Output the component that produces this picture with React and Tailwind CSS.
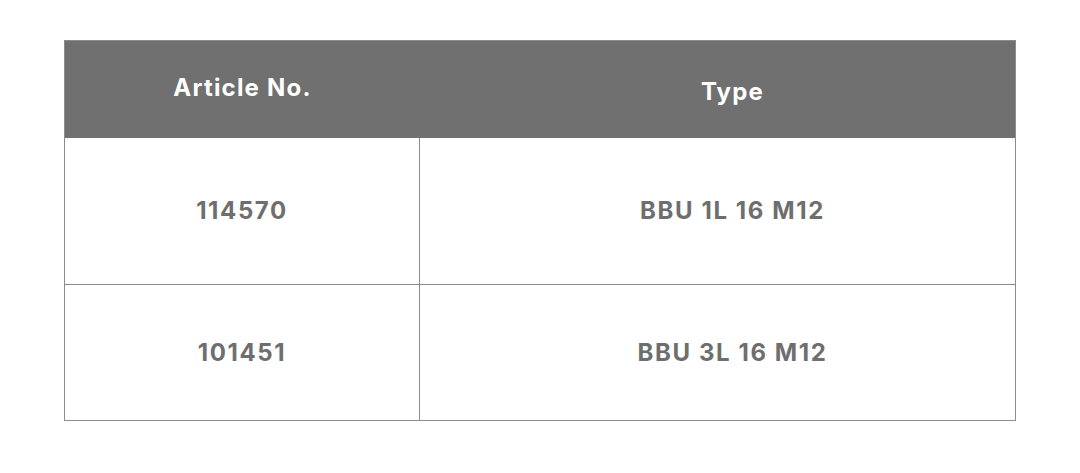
import React from "react";

const rows = [
  { article: "114570", type: "BBU 1L 16 M12", h: "h-[146px]" },
  { article: "101451", type: "BBU 3L 16 M12", h: "h-[136px]" },
];

export default function App() {
  return (
    <div className="h-[473px] w-[1080px] bg-white pt-10 pl-16 font-['Inter',sans-serif]">
      <div className="w-[952px] border border-[#8c8c8c]">
        <div className="flex h-[97px] bg-[#707070] text-[24px] font-bold tracking-[1.2px] text-white">
          <div className="flex w-[355px] items-center justify-center pb-1">Article No.</div>
          <div className="flex flex-1 items-center justify-center pt-1 pl-[30px]">Type</div>
        </div>
        {rows.map((r, i) => (
          <div
            key={r.article}
            className={`flex ${r.h} text-[24px] font-bold tracking-[1.6px] text-[#6e6e6e] ${i > 0 ? "border-t border-[#8c8c8c]" : ""}`}
          >
            <div className="flex w-[355px] items-center justify-center border-r border-[#8c8c8c]">
              {r.article}
            </div>
            <div className="flex flex-1 items-center justify-center pl-[30px]">{r.type}</div>
          </div>
        ))}
      </div>
    </div>
  );
}
